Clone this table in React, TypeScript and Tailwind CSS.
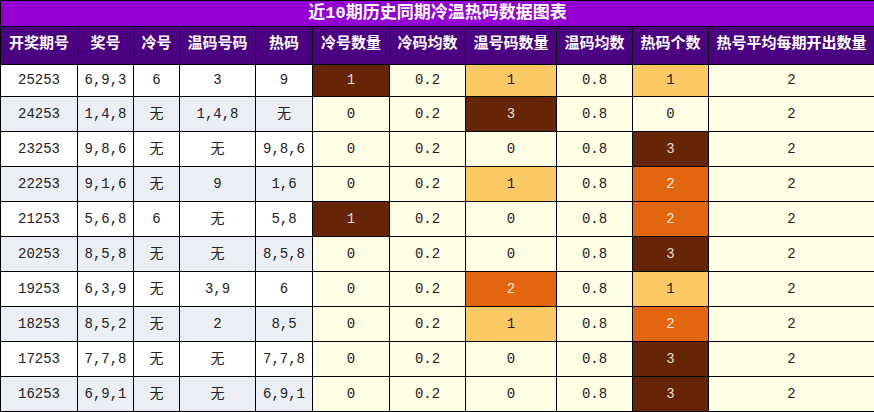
type Tone = "dark" | "orange" | "light" | undefined;

interface Row {
    issue: string;
    prize: string;
    cold: string;
    warm: string;
    hot: string;
    coldCount: [string, Tone];
    warmCount: [string, Tone];
    hotCount: [string, Tone];
}

const rows: Row[] = [
    { issue: "25253", prize: "6,9,3", cold: "6", warm: "3", hot: "9", coldCount: ["1", "dark"], warmCount: ["1", "light"], hotCount: ["1", "light"] },
    { issue: "24253", prize: "1,4,8", cold: "无", warm: "1,4,8", hot: "无", coldCount: ["0", undefined], warmCount: ["3", "dark"], hotCount: ["0", undefined] },
    { issue: "23253", prize: "9,8,6", cold: "无", warm: "无", hot: "9,8,6", coldCount: ["0", undefined], warmCount: ["0", undefined], hotCount: ["3", "dark"] },
    { issue: "22253", prize: "9,1,6", cold: "无", warm: "9", hot: "1,6", coldCount: ["0", undefined], warmCount: ["1", "light"], hotCount: ["2", "orange"] },
    { issue: "21253", prize: "5,6,8", cold: "6", warm: "无", hot: "5,8", coldCount: ["1", "dark"], warmCount: ["0", undefined], hotCount: ["2", "orange"] },
    { issue: "20253", prize: "8,5,8", cold: "无", warm: "无", hot: "8,5,8", coldCount: ["0", undefined], warmCount: ["0", undefined], hotCount: ["3", "dark"] },
    { issue: "19253", prize: "6,3,9", cold: "无", warm: "3,9", hot: "6", coldCount: ["0", undefined], warmCount: ["2", "orange"], hotCount: ["1", "light"] },
    { issue: "18253", prize: "8,5,2", cold: "无", warm: "2", hot: "8,5", coldCount: ["0", undefined], warmCount: ["1", "light"], hotCount: ["2", "orange"] },
    { issue: "17253", prize: "7,7,8", cold: "无", warm: "无", hot: "7,7,8", coldCount: ["0", undefined], warmCount: ["0", undefined], hotCount: ["3", "dark"] },
    { issue: "16253", prize: "6,9,1", cold: "无", warm: "无", hot: "6,9,1", coldCount: ["0", undefined], warmCount: ["0", undefined], hotCount: ["3", "dark"] },
];

const headers = ["开奖期号", "奖号", "冷号", "温码号码", "热码", "冷号数量", "冷码均数", "温号码数量", "温码均数", "热码个数", "热号平均每期开出数量"];
const widths = ["w-[77px]", "w-[56px]", "w-[46px]", "w-[76px]", "w-[57px]", "w-[77px]", "w-[76px]", "w-[91px]", "w-[76px]", "w-[76px]", "w-[166px]"];

const toneClass = (tone: Tone) => {
    if (tone === "dark") return "bg-[#662506] text-[#e6ddd5]";
    if (tone === "orange") return "bg-[#e2650f] text-[#f6e8dc]";
    if (tone === "light") return "bg-[#fdc965] text-[#222]";
    return "bg-[#ffffe6] text-[#222]";
};

const cell = "border border-black text-center p-0";

const App = () => {
    return (
        <div className="w-[874px] h-[412px] overflow-hidden bg-white font-['Liberation_Mono','Noto_Sans_CJK_SC',monospace]">
            <table className="w-[874px] table-fixed border-collapse">
                <colgroup>
                    {widths.map((w, i) => (
                        <col key={i} className={w} />
                    ))}
                </colgroup>
                <tbody>
                    <tr className="h-[26px]">
                        <td colSpan={11} className="border border-black bg-[#9400d3] p-0 text-center text-[17px] font-bold leading-none text-white">
                            近10期历史同期冷温热码数据图表
                        </td>
                    </tr>
                    <tr className="h-[38px]">
                        {headers.map((h) => (
                            <td key={h} className={`${cell} bg-[#4b0082] text-[15px] font-bold text-white`}>
                                {h}
                            </td>
                        ))}
                    </tr>
                    {rows.map((r, i) => {
                        const stripe = i % 2 === 0 ? "bg-white" : "bg-[#ebeef2]";
                        return (
                            <tr key={r.issue} className={i === 0 ? "h-[32px]" : "h-[35px]"}>
                                <td className={`${cell} ${stripe} text-[14px] text-[#222]`}>{r.issue}</td>
                                <td className={`${cell} ${stripe} text-[14px] text-[#222]`}>{r.prize}</td>
                                <td className={`${cell} ${stripe} text-[14px] text-[#222]`}>{r.cold}</td>
                                <td className={`${cell} ${stripe} text-[14px] text-[#222]`}>{r.warm}</td>
                                <td className={`${cell} ${stripe} text-[14px] text-[#222]`}>{r.hot}</td>
                                <td className={`${cell} ${toneClass(r.coldCount[1])} text-[14px]`}>{r.coldCount[0]}</td>
                                <td className={`${cell} ${toneClass(undefined)} text-[14px]`}>0.2</td>
                                <td className={`${cell} ${toneClass(r.warmCount[1])} text-[14px]`}>{r.warmCount[0]}</td>
                                <td className={`${cell} ${toneClass(undefined)} text-[14px]`}>0.8</td>
                                <td className={`${cell} ${toneClass(r.hotCount[1])} text-[14px]`}>{r.hotCount[0]}</td>
                                <td className={`${cell} ${toneClass(undefined)} text-[14px]`}>2</td>
                            </tr>
                        );
                    })}
                </tbody>
            </table>
        </div>
    );
};

export default App;
